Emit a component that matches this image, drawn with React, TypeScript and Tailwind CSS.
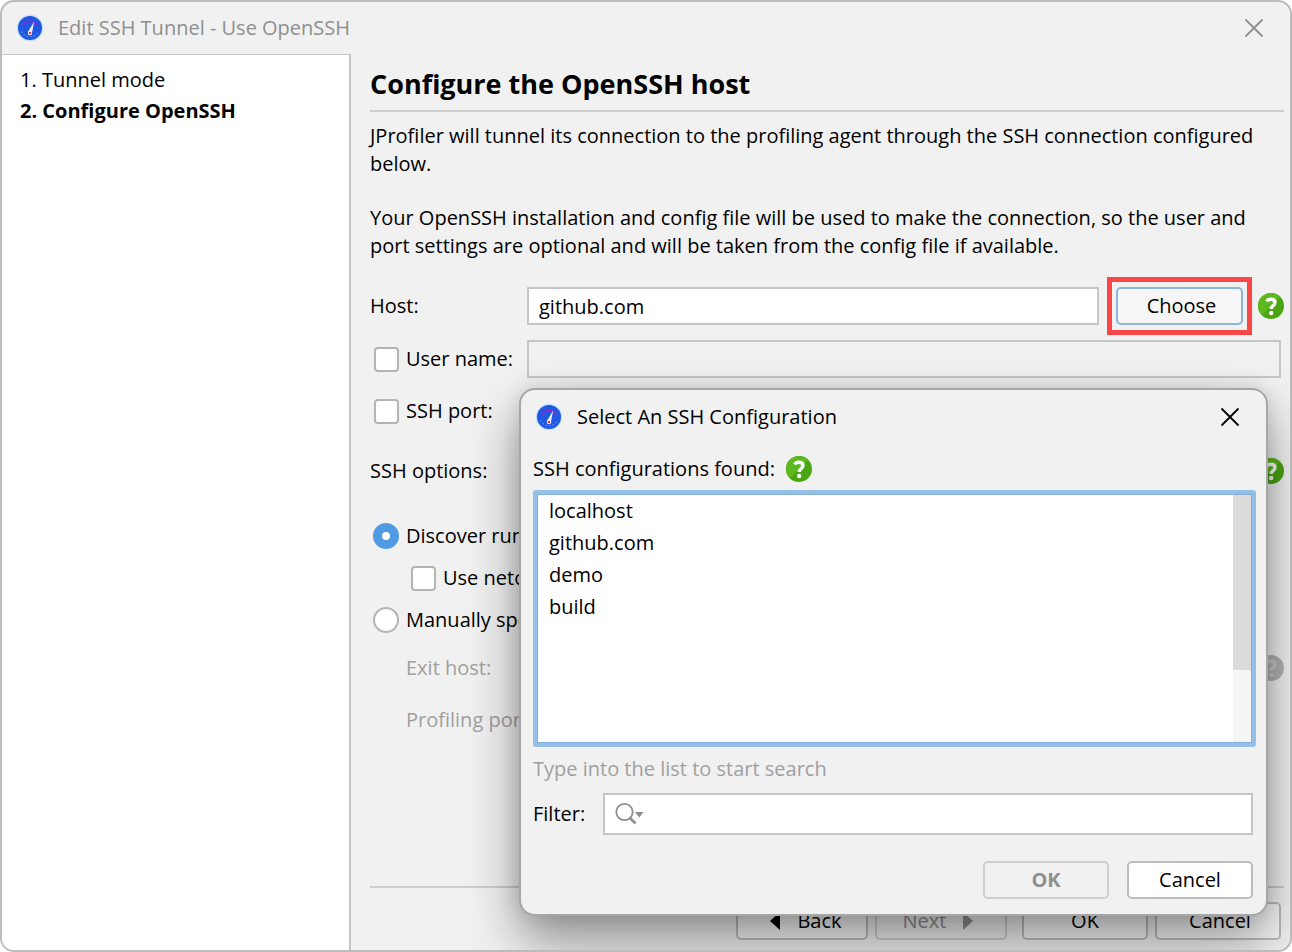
import { ReactNode } from "react";

function AppIcon() {
  return (
    <svg width="28" height="28" viewBox="0 0 28 28" aria-hidden="true" className="shrink-0">
      <circle cx="14" cy="14" r="13.2" fill="#bfe0ff" />
      <circle cx="14" cy="14" r="12" fill="#2257e2" />
      <path d="M6.8 11.5 A8.2 8.2 0 0 1 21.2 11.5" fill="none" stroke="#8a2bc8" strokeWidth="1.4" />
      <path d="M5.5 17.5 A9.5 9.5 0 0 0 22.5 17.5" fill="none" stroke="#4f9bf5" strokeWidth="1.2" strokeDasharray="1.5 2" />
      <path d="M18.2 7.5 L16 18.8 A2.1 2.1 0 0 1 12.2 17.6 Z" fill="#e9f1ff" />
      <circle cx="14" cy="19" r="2.2" fill="#ffffff" />
      <circle cx="14" cy="19" r="1.3" fill="#e8323c" />
    </svg>
  );
}

function CloseIcon() {
  return (
    <svg width="20" height="20" viewBox="0 0 20 20" aria-hidden="true">
      <path d="M1.5 1.5 L18.5 18.5 M18.5 1.5 L1.5 18.5" stroke="currentColor" strokeWidth="1.8" fill="none" />
    </svg>
  );
}

function HelpButton({ disabled = false }: { disabled?: boolean }) {
  const mark = disabled ? "#cacaca" : "#ffffff";
  return (
    <button type="button" aria-label="Help" disabled={disabled} className="shrink-0">
      <svg width="26" height="26" viewBox="0 0 26 26" className="block" aria-hidden="true">
        <circle cx="13" cy="13" r="13" fill={disabled ? "#b4b4b4" : "#4aa512"} />
        {!disabled && <path d="M0 13 A13 13 0 0 1 22.2 3.8 L3.8 22.2 A13 13 0 0 1 0 13" fill="#5cb81e" />}
        <path
          d="M8.6 8.4 C9.6 6.8 11.2 6.2 12.8 6.2 C15.4 6.2 17 7.5 17 9.6 C17 12.4 13.2 12.6 13.2 16"
          fill="none"
          stroke={mark}
          strokeWidth="3.4"
        />
        <circle cx="13.2" cy="20" r="2.2" fill={mark} />
      </svg>
    </button>
  );
}

function Check({ id, children }: { id: string; children: ReactNode }) {
  return (
    <div className="flex items-center gap-[7px]">
      <input
        id={id}
        type="checkbox"
        className="size-[25px] shrink-0 appearance-none rounded-[4px] border-2 border-[#b4b4b4] bg-white checked:bg-[#4f9be3]"
      />
      <label htmlFor={id} className="whitespace-nowrap">{children}</label>
    </div>
  );
}

function Radio({ id, checked = false, children }: { id: string; checked?: boolean; children: ReactNode }) {
  return (
    <div className="flex h-[30px] items-center gap-[7px] pl-[3px]">
      <input
        id={id}
        type="radio"
        name="mode"
        defaultChecked={checked}
        className="size-[26px] shrink-0 appearance-none rounded-full border-2 border-[#b4b4b4] bg-white checked:border-9 checked:border-[#4f9be3]"
      />
      <label htmlFor={id} className="whitespace-nowrap">{children}</label>
    </div>
  );
}

const field = "h-[38px] min-w-0 flex-1 border-2 border-[#c6c6c6] px-[10px]";
const row = "flex h-[38px] items-center";
const labelCol = "w-[157px] shrink-0";
const button = "flex h-[38px] items-center justify-center rounded-[5px] border-2";
const configurations = ["localhost", "github.com", "demo", "build"];
const steps = ["Tunnel mode", "Configure OpenSSH"];

function SelectDialog() {
  return (
    <section
      role="dialog"
      aria-labelledby="dialog-title"
      className="absolute top-[386px] right-[22px] flex w-[749px] flex-col rounded-[16px] border-2 border-[#a6a6a6] bg-[#f1f1f1] pr-[10px] pb-[15px] pl-[12px] shadow-[0_26px_52px_rgba(0,0,0,0.4),0_0_20px_rgba(0,0,0,0.12)]"
    >
      <header className="flex h-[53px] items-center pr-[16px] pl-[2px]">
        <AppIcon />
        <h2 id="dialog-title" className="ml-[14px] flex-1">Select An SSH Configuration</h2>
        <button type="button" aria-label="Close"><CloseIcon /></button>
      </header>
      <div className="flex h-[47px] items-center gap-[11px] pt-[4px]">
        <span id="list-label">SSH configurations found:</span>
        <HelpButton />
      </div>
      <div className="flex h-[257px] rounded-[3px] border-4 border-[#94c0e7] bg-white">
        <ul role="listbox" aria-labelledby="list-label" tabIndex={0} className="flex-1 border border-r-0 border-[#83aed6] pl-[11px] outline-none">
          {configurations.map((name) => (
            <li key={name} role="option" aria-selected={false} className="leading-8">{name}</li>
          ))}
        </ul>
        <div className="w-[19px] border border-l-0 border-[#83aed6] bg-[#f5f5f5]">
          <div className="h-[175px] bg-[#dbdbdb]" />
        </div>
      </div>
      <p className="mt-[6px] leading-8 text-[#a0a0a0]">Type into the list to start search</p>
      <div className="mt-[8px] mr-[3px] flex h-[42px] items-center">
        <label htmlFor="filter" className="w-[70px]">Filter:</label>
        <div className="flex h-full flex-1 items-center border-2 border-[#c6c6c6] bg-white pl-[10px]">
          <svg width="30" height="24" viewBox="0 0 30 24" fill="none" aria-hidden="true">
            <circle cx="9.5" cy="10" r="8.2" stroke="#8c8f91" strokeWidth="1.8" />
            <path d="M14.5 15.5 L20.5 21.5" stroke="#8c8f91" strokeWidth="2.6" />
            <path d="M20 10 H28.5 L24.2 15.5 Z" fill="#8c8f91" />
          </svg>
          <input id="filter" type="text" className="min-w-0 flex-1 px-1 outline-none" />
        </div>
      </div>
      <footer className="mt-[26px] mr-[3px] flex justify-end gap-[18px]">
        <button type="button" disabled className={`${button} w-[126px] border-[#cfcfcf] font-bold text-[#8f8f8f]`}>OK</button>
        <button type="button" className={`${button} w-[126px] border-[#bdbdbd] bg-white`}>Cancel</button>
      </footer>
    </section>
  );
}

export default function App() {
  return (
    <div className="relative flex min-h-screen flex-col overflow-hidden rounded-[14px] border-2 border-[#bcbcbc] bg-[#f1f1f1] font-['Open_Sans',sans-serif] text-[20px] leading-7 text-black">
      <header className="flex h-[52px] items-center pr-[26px] pl-[14px] text-[#8f8f8f]">
        <AppIcon />
        <h1 className="ml-[14px] flex-1">Edit SSH Tunnel - Use OpenSSH</h1>
        <button type="button" aria-label="Close"><CloseIcon /></button>
      </header>
      <div className="flex flex-1">
        <nav className="w-[349px] shrink-0 border-t border-r-2 border-[#c6c6c6] bg-white pt-[9px] pl-[18px]">
          <ol className="leading-[31px]">
            {steps.map((step, i) => (
              <li key={step} className={i === 1 ? "font-bold" : ""}>{i + 1}. {step}</li>
            ))}
          </ol>
        </nav>
        <main className="flex min-w-0 flex-1 flex-col pt-[8px] pr-[6px] pb-[10px] pl-[19px]">
          <h2 className="border-b-2 border-[#cdcdcd] pb-[4px] text-[27px] leading-[44px] font-bold">Configure the OpenSSH host</h2>
          <p className="mt-[10px]">
            JProfiler will tunnel its connection to the profiling agent through the SSH connection configured below.
          </p>
          <p className="mt-[26px]">
            Your OpenSSH installation and config file will be used to make the connection, so the user and port settings are optional and will be taken from the config file if available.
          </p>
          <div className={`${row} mt-[27px]`}>
            <label htmlFor="host" className={labelCol}>Host:</label>
            <input id="host" type="text" defaultValue="github.com" className={`${field} bg-white`} />
            <div className="relative mr-[15px] ml-[17px]">
              <button type="button" className={`${button} w-[127px] border-[#8db4dc] bg-[#f6f6f6] pl-[4px]`}>Choose</button>
              <div className="pointer-events-none absolute -inset-x-[9px] -inset-y-[10px] border-5 border-[#fa4646]" />
            </div>
            <HelpButton />
          </div>
          <div className={`${row} mt-[15px] pr-[3px]`}>
            <div className={`${labelCol} pl-[4px]`}><Check id="use-user">User name:</Check></div>
            <input type="text" aria-label="User name" disabled className={field} />
          </div>
          <div className={`${row} mt-[14px] pr-[3px]`}>
            <div className={`${labelCol} pl-[4px]`}><Check id="use-port">SSH port:</Check></div>
            <input type="text" aria-label="SSH port" disabled className="h-[38px] w-[120px] border-2 border-[#c6c6c6]" />
          </div>
          <div className={`${row} mt-[22px]`}>
            <label htmlFor="options" className={labelCol}>SSH options:</label>
            <input id="options" type="text" className={`${field} mr-[16px] bg-white`} />
            <HelpButton />
          </div>
          <div className="mt-[31px] flex flex-col gap-[12px]">
            <Radio id="discover" checked>Discover running</Radio>
            <div className="flex h-[30px] items-center pl-[41px]"><Check id="netcat">Use netcat</Check></div>
            <Radio id="manual">Manually specify</Radio>
          </div>
          <div className={`${row} mt-[14px] pl-[36px] text-[#a0a0a0]`}>
            <label htmlFor="exit-host" className={labelCol}>Exit host:</label>
            <input id="exit-host" type="text" disabled className={`${field} mr-[16px]`} />
            <HelpButton disabled />
          </div>
          <div className={`${row} mt-[14px] pl-[36px] text-[#a0a0a0]`}>
            <label htmlFor="profiling-port" className={labelCol}>Profiling port:</label>
            <input id="profiling-port" type="text" disabled className="h-[38px] w-[120px] border-2 border-[#c6c6c6]" />
          </div>
          <footer className="mt-auto flex justify-end border-t-2 border-[#cdcdcd] pt-[14px] pr-[3px]">
            <button type="button" className={`${button} w-[132px] gap-[17px] border-[#bdbdbd] bg-[#f8f8f8] pl-[8px]`}>
              <svg width="10" height="18" viewBox="0 0 10 18" aria-hidden="true"><path d="M10 0 V18 L0 9 Z" fill="currentColor" /></svg>
              Back
            </button>
            <button type="button" disabled className={`${button} ml-[7px] w-[132px] gap-[17px] border-[#cfcfcf] pr-[6px] text-[#909090]`}>
              Next
              <svg width="10" height="18" viewBox="0 0 10 18" aria-hidden="true"><path d="M0 0 V18 L10 9 Z" fill="currentColor" /></svg>
            </button>
            <button type="button" className={`${button} ml-[15px] w-[126px] border-[#bdbdbd] bg-[#f8f8f8]`}>OK</button>
            <button type="button" className={`${button} ml-[7px] w-[126px] border-[#bdbdbd] bg-[#f8f8f8] pl-[4px]`}>Cancel</button>
          </footer>
        </main>
      </div>
      <SelectDialog />
    </div>
  );
}
